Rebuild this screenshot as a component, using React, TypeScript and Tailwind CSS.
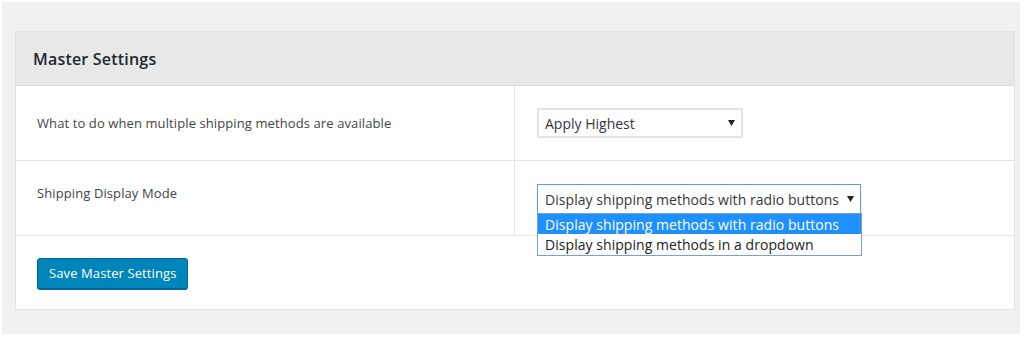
import React from "react";

const font = { fontFamily: '"Segoe UI", "Open Sans", "Noto Sans", sans-serif' };

function Arrow() {
  return (
    <svg width="7" height="6" viewBox="0 0 7 6" className="shrink-0">
      <path d="M0 0 H7 L3.5 6 Z" fill="#222" />
    </svg>
  );
}

export default function App() {
  return (
    <div className="bg-white pl-[2px] pt-[2px] pr-[4px] w-[1024px] h-[338px]" style={font}>
      <div className="bg-[#f1f1f1] h-[332px] pt-[29px] pl-[13px] pr-[4px]">
        <div className="w-[1000px] border border-[#e2e2e2] bg-white">
          <div className="h-[54px] bg-[#e8e8e8] border-b border-[#dcdcdc] flex items-center pl-[17px]">
            <h2 className="text-[16px] font-semibold text-[#23282d] tracking-[0.2px] pt-[1px]">Master Settings</h2>
          </div>
          <div className="flex h-[75px] border-b border-[#e5e5e5]">
            <div className="w-[499px] border-r border-[#e5e5e5] flex items-center pl-[21px] pt-[2px] text-[13px] text-[#444] tracking-[0.1px]">
              What to do when multiple shipping methods are available
            </div>
            <div className="flex-1 pl-[22px] pt-[22px]">
              <div className="w-[206px] h-[30px] border-2 border-[#e3e3e3] flex items-center justify-between pl-[6px] pr-[6px] text-[14px] text-[#32373c]">
                <span>Apply Highest</span>
                <Arrow />
              </div>
            </div>
          </div>
          <div className="flex h-[75px] border-b border-[#e5e5e5]">
            <div className="w-[499px] border-r border-[#e5e5e5] pl-[21px] pt-[23px] text-[13px] text-[#444] tracking-[0.1px]">
              Shipping Display Mode
            </div>
            <div className="flex-1 pl-[22px] pt-[23px] relative">
              <div className="w-[324px] h-[30px] border border-[#5b9dd9] flex items-center justify-between pl-[7px] pr-[6px] text-[14px] text-[#32373c] tracking-[0.05px]">
                <span>Display shipping methods with radio buttons</span>
                <Arrow />
              </div>
              <div className="absolute left-[22px] top-[52px] w-[325px] border border-[#7a9fd6] bg-white text-[14px] z-10 tracking-[0.05px]">
                <div className="h-[20px] bg-[#1e90ff] text-white flex items-center pl-[7px]">
                  Display shipping methods with radio buttons
                </div>
                <div className="h-[21px] text-[#222] flex items-center pl-[7px]">
                  Display shipping methods in a dropdown
                </div>
              </div>
            </div>
          </div>
          <div className="h-[73px] pl-[21px] pt-[22px]">
            <button className="h-[31px] px-[11px] rounded-[3px] bg-[#0085ba] border border-[#006799] text-white text-[13px] tracking-[0.1px] shadow-[0_1px_0_#006799]">
              Save Master Settings
            </button>
          </div>
        </div>
      </div>
    </div>
  );
}
